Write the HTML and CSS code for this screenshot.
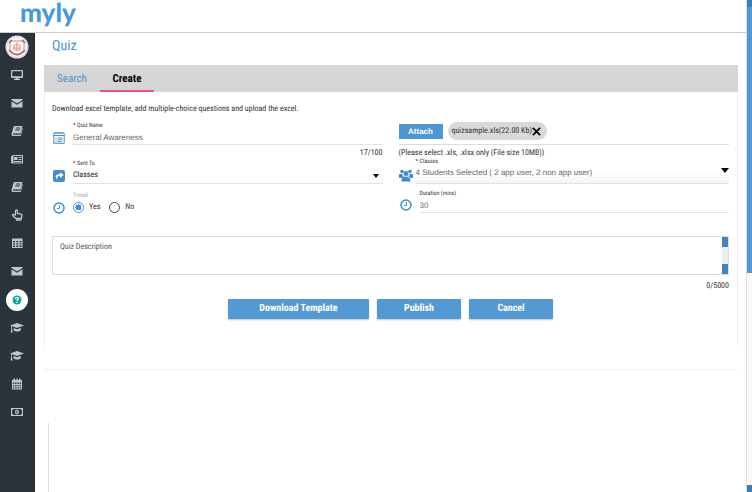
FILE: index.html
```html
<!DOCTYPE html>
<html lang="en">
<head>
<meta charset="utf-8">
<title>myly - Quiz</title>
<link rel="stylesheet" href="styles.css">
</head>
<body>
<svg class="defs" aria-hidden="true">
  <symbol id="mail" viewBox="0 0 12 12"><path d="M.5 2h11v1L6 6.500.5 3zM.5 4.200 6 7.700l5.500-3.500V10.500H.5z"/></symbol>
  <symbol id="book" viewBox="0 0 12 12"><path d="M4 1h7.500L9.500 8.500H2.500c-1 0-1 1.300 0 1.300h7L11.300 3l.5.500-2 7.500H2C.5 11 .2 9.700.6 8.500L2.500 2C2.800 1.300 3.200 1 4 1z"/><path class="cut" d="M4.800 3h4.500M4.300 5h4.500"/></symbol>
  <symbol id="cap" viewBox="0 0 14 12"><path d="M7 1 14 3.500 7 6 2 4.300V7l.6 3.500H.6L1.200 7V4L0 3.500zM3.500 6 7 7.200 10.800 6v2.300C9 10 5.300 10 3.500 8.300z"/></symbol>
  <symbol id="clock" viewBox="0 0 12 12"><circle class="line" cx="6" cy="6" r="5"/><path class="line thin" d="M6.500 3v3.500H4"/></symbol>
</svg>
<div class="page">
  <header class="header"><a class="logo" href="#">myly</a></header>
  <div class="body">
    <nav class="sidebar" aria-label="Main">
      <a class="item crest" href="#" aria-label="School"><svg viewBox="0 0 24 24"><circle cx="12" cy="12" r="11.500" fill="#f5f2f3"/><circle cx="12" cy="12" r="10.500" fill="none" stroke="#d3bcc3" stroke-width="1" stroke-dasharray="2 1"/><path d="M5 6h14v7c0 4-4 6-7 7-3-1-7-3-7-7z" fill="#fff" stroke="#a99aa5"/><path d="M9 10h6v5H9zM12 7v9M8 13h8" fill="none" stroke="#d49a7c"/><path d="M4 15q8 9 16 0M4 8l3-3M20 8l-3-3" fill="none" stroke="#c14b60" stroke-width="1.300"/></svg></a>
      <a class="item" href="#" aria-label="Dashboard"><svg viewBox="0 0 12 12"><path fill-rule="evenodd" d="M1 1h10q1 0 1 1v6q0 1-1 1H7.500v1H9v1H3v-1h1.500V9H1Q0 9 0 8V2q0-1 1-1zm.300 1.300v5h9.400v-5z"/></svg></a>
      <a class="item" href="#" aria-label="Messages"><svg><use href="#mail"/></svg></a>
      <a class="item" href="#" aria-label="Diary"><svg><use href="#book"/></svg></a>
      <a class="item" href="#" aria-label="News"><svg viewBox="0 0 12 12"><path fill-rule="evenodd" d="M1.500 2H12v8.500H1Q0 10.500 0 9V3h1.500zM2.500 3v6.500H11V3zM3 4h3.500v3H3zm4.500 0h3v1h-3zm0 2h3v1h-3zM3 8h7.500v1H3z"/></svg></a>
      <a class="item" href="#" aria-label="Library"><svg><use href="#book"/></svg></a>
      <a class="item" href="#" aria-label="Activities"><svg viewBox="0 0 12 12"><path fill="none" stroke="currentColor" stroke-width="1.300" d="M4.500 6V1.800q0-1 1-1t1 1V4.500l3.500.700q1 .300.900 1.500L10.300 9.500H5L1.500 6.500q0-1.500 1.500-1zM5 11.200h5.500"/></svg></a>
      <a class="item" href="#" aria-label="Timetable"><svg viewBox="0 0 12 12"><path fill-rule="evenodd" d="M1 1.500h10.500V11H1zM2 4v1.300h2V4zm3.300 0v1.300h2V4zm3.200 0v1.300h2V4zM2 6.300v1.300h2V6.300zm3.300 0v1.300h2V6.300zm3.200 0v1.300h2V6.300zM2 8.600v1.400h2V8.600zm3.300 0v1.400h2V8.600zm3.200 0v1.400h2V8.600z"/></svg></a>
      <a class="item" href="#" aria-label="Inbox"><svg><use href="#mail"/></svg></a>
      <a class="item current" href="#" aria-label="Quiz"><svg viewBox="0 0 12 12"><circle cx="6" cy="6" r="4.500"/><path fill="none" stroke="#fff" stroke-width="1.200" d="M4.500 5q0-1.500 1.500-1.500T7.500 4.800Q7.500 5.500 6 6.200V7M6 7.700v1.200"/></svg></a>
      <a class="item" href="#" aria-label="Courses"><svg class="hat"><use href="#cap"/></svg></a>
      <a class="item" href="#" aria-label="Graduation"><svg class="hat"><use href="#cap"/></svg></a>
      <a class="item" href="#" aria-label="Calendar"><svg viewBox="0 0 12 12"><path fill-rule="evenodd" d="M1 2h1.500V.500H4V2h1.300V.500h1.400V2H8V.500h1.500V2H11v9.500H1zm1 2.500V6h1.300V4.500zm2.200 0V6h1.400V4.500zm2.300 0V6h1.300V4.500zm2.200 0V6H10V4.500zM2 7v1.300h1.300V7zm2.200 0v1.300h1.400V7zm2.300 0v1.300h1.300V7zm2.200 0v1.300H10V7zM2 9.300v1.200h1.300V9.300zm2.200 0v1.200h1.400V9.300zm2.300 0v1.200h1.300V9.300zm2.200 0v1.200H10V9.300z"/></svg></a>
      <a class="item" href="#" aria-label="Fees"><svg viewBox="0 0 12 12"><path fill-rule="evenodd" d="M0 2h12v8H0zm2.500 1Q2 4 1 4.200v3.600Q2 8 2.500 9h7q.500-1 1.500-1.200V4.200Q10 4 9.500 3z"/><ellipse cx="6" cy="6" rx="2" ry="2.600"/><path class="cut" d="M6 4.500v3"/></svg></a>
    </nav>
    <main class="main">
      <h1 class="title">Quiz</h1>
      <section class="panel">
        <nav class="tabs" aria-label="Quiz views"><a class="tab" href="#">Search</a><a class="tab active" href="#">Create</a></nav>
        <form class="form">
          <p class="intro">Download excel template, add multiple-choice questions and upload the excel.</p>
          <div class="columns">
            <div class="row name-row">
              <svg class="icon" viewBox="0 0 12 12"><path class="line thin" d="M.8 1h10.400v10.300H.8zM.8 3.500h10.400M3 0v2M5 0v2M7 0v2M9 0v2M2.500 6h1M4.500 6h5M2.500 7.800h1M4.500 7.800h5M2.500 9.600h1M4.500 9.600h4"/></svg>
              <div class="field"><label for="name"><b>*</b> Quiz Name</label><input class="control wide" id="name" value="General Awareness"></div>
              <span class="note end">17/100</span>
            </div>
            <div class="row name-row">
              <div class="upload"><button class="attach" type="button">Attach</button><span class="chip">quizsample.xls(22.00 Kb)<button class="remove" type="button" aria-label="Remove file"><svg viewBox="0 0 10 10"><path d="m1 1 8 8M9 1 1 9"/></svg></button></span></div>
              <span class="note">(Please select .xls, .xlsx only (File size 10MB))</span>
            </div>
            <div class="row sent">
              <svg class="icon" viewBox="0 0 12 12"><rect width="12" height="12" rx="2" fill="currentColor"/><path fill="#fff" d="M7 2.200 10.700 5 7 8V6Q3.500 5.800 4.200 10 0 4.500 7 4z"/></svg>
              <div class="field"><label for="sent"><b>*</b> Sent To</label><select class="control dark" id="sent"><option>Classes</option></select><svg class="arrow" viewBox="0 0 8 5"><path d="M1 0h6L4 4z"/></svg></div>
            </div>
            <div class="row tight">
              <svg class="icon people" viewBox="0 0 14 13"><g fill="currentColor"><circle cx="3" cy="2.500" r="1.800"/><circle cx="11" cy="2.500" r="1.800"/><circle cx="7" cy="4.500" r="2.500"/><path d="M0 5h3.500q0 2 1 2.500L2.500 9H0zM10.500 5H14v4h-2.500l-2-1.500q1-.500 1-2.500zM2.500 12.500Q2 7 7 7.500t4.500 5z"/></g></svg>
              <div class="field shaded"><label for="classes"><b>*</b> Classes</label><select class="control wide" id="classes"><option>4 Students Selected ( 2 app user, 2 non app user)</option></select><svg class="arrow big" viewBox="0 0 8 5"><path d="M0 0h8L4 5z"/></svg></div>
            </div>
            <fieldset class="row timed">
              <svg class="icon"><use href="#clock"/></svg>
              <div class="field"><legend>Timed</legend><div class="radios"><label><input type="radio" name="timed" checked>Yes</label><label><input type="radio" name="timed">No</label></div></div>
            </fieldset>
            <div class="row roomy">
              <svg class="icon"><use href="#clock"/></svg>
              <div class="field"><label for="mins">Duration (mins)</label><input class="control wide" id="mins" value="30"></div>
            </div>
          </div>
          <div class="description"><textarea aria-label="Quiz Description" placeholder="Quiz Description"></textarea><span class="mini-scroll"></span></div>
          <div class="note end count">0/5000</div>
          <div class="actions"><button class="large" type="button">Download Template</button><button type="button">Publish</button><button type="button">Cancel</button></div>
        </form>
      </section>
      <div class="footer"></div>
    </main>
  </div>
</div>
<div class="rail" aria-hidden="true"><span class="cap-end"></span><span class="thumb"></span><span class="track"></span><span class="cap-end"></span></div>
</body>
</html>
```
FILE: styles.css
```css
* { box-sizing: border-box; }
body { margin: 0; min-height: 100vh; display: flex; background: #fff; color: #333; font: 8px/10px "Roboto Condensed", "Liberation Sans Narrow", Roboto, sans-serif; text-rendering: geometricPrecision; }
button, input, select, textarea { font: inherit; color: inherit; margin: 0; text-rendering: inherit; }
a { text-decoration: none; }
.defs { position: absolute; width: 0; height: 0; }
.page { flex: 1; min-width: 0; display: flex; flex-direction: column; }
.header { height: 33px; border-bottom: 1px solid #ccc; padding-left: 20px; }
.logo { display: inline-block; vertical-align: top; margin-top: -4px; color: #4b98d3; font: 900 26px/32px Lato, sans-serif; }
.body { flex: 1; display: flex; }
.sidebar { width: 35px; flex: none; background: #2b333b; color: #c3c6c9; border-right: 1px solid #20272d; }
.item { height: 28px; display: flex; align-items: center; justify-content: center; color: inherit; }
.item svg { width: 12px; height: 12px; fill: currentColor; }
.item .hat { width: 14px; }
.item.crest svg { width: 24px; height: 24px; }
.item.current { width: 22px; height: 22px; margin: 4px 6px 3px; border-radius: 50%; background: #fff; color: #16a596; }
.cut { fill: none; stroke: #2b333b; stroke-width: 1; }
.main { flex: 1; min-width: 0; padding: 4px 8px 0 9px; display: flex; flex-direction: column; }
.title { margin: 0 8px; color: #4b93cc; font-size: 14px; line-height: 18px; font-weight: 400; }
.panel { margin-top: 10px; border: 1px solid #eee; border-width: 0 1px; }
.tabs { height: 27px; background: #d6d6d6; display: flex; font-size: 11px; line-height: 28px; margin: 0 -1px; }
.tab { width: 56px; text-align: center; color: #4b93cc; }
.tab.active { color: #000; font-weight: 700; width: 54px; border-bottom: 2px solid #ef5277; }
.form { padding: 12px 8px 27px 7px; }
.intro { margin: 0 0 8px; line-height: 10px; }
.columns { display: grid; grid-template-columns: 1fr 1fr; column-gap: 16px; }
.row { min-width: 0; height: 38px; display: flex; flex-wrap: wrap; align-items: flex-start; margin: 0; padding: 0; border: 0; }
.icon { width: 12px; height: 12px; margin: 10px 8px 0 1px; color: #448dc9; }
.line { fill: none; stroke: currentColor; stroke-width: 1.500; }
.thin { stroke-width: 1; }
.field { position: relative; flex: 1; min-width: 0; border-bottom: 1px solid #e2e2e2; }
.field > label { display: block; font-size: 6px; line-height: 8px; }
.field b { color: #d22; }
.control { display: block; width: 100%; height: 14px; padding: 0; border: 0; background: transparent; appearance: none; font-size: 8px; outline: 0; }
.wide { font-family: "Liberation Sans", sans-serif; color: #666; }
.dark { color: #222; }
.arrow { position: absolute; right: 3px; bottom: 4px; width: 8px; height: 5px; }
.arrow.big { right: 0; bottom: 10px; }
.note { flex-basis: 100%; line-height: 12px; }
.end { text-align: right; }
.name-row .field { height: 23px; }
.upload { flex-basis: 100%; height: 23px; border-bottom: 1px solid #ddd; display: flex; align-items: flex-start; gap: 5px; }
.attach { width: 44px; height: 15px; border: 0; padding: 0; margin-top: 2px; background: #4f96d1; color: #fff; font: 700 8px/15px "Liberation Sans", sans-serif; }
.chip { height: 18px; border-radius: 9px; padding: 0 6px 0 4px; display: flex; align-items: center; background: #d9d9d9; }
.remove { width: 9px; height: 9px; border: 0; padding: 0; background: none; display: flex; }
.remove svg { width: 9px; height: 9px; stroke: #000; stroke-width: 2; }
.sent .field { height: 24px; }
.tight { height: 36px; margin-top: -2px; }
.people { width: 14px; height: 13px; margin: 11px 3px 0 0; }
.shaded { height: 26px; background: linear-gradient(#fff 50%, #f5f5f5); }
.roomy { margin-top: -8px; }
.roomy .icon { margin-top: 9px; }
.roomy .field { height: 23px; }
.timed { margin-top: -6px; }
.timed legend { padding: 0; color: #aaa; font-size: 6px; line-height: 8px; }
.timed .field { border: 0; }
.radios { display: flex; gap: 9px; }
.radios label { display: flex; align-items: center; gap: 5px; height: 14px; }
.radios input { appearance: none; width: 11px; height: 11px; border: 1px solid #444; border-radius: 50%; }
.radios input:checked { border-color: #448dc9; background: radial-gradient(circle, #448dc9 3px, transparent 3px); }
.description { height: 39px; margin-top: 6px; border: 1px solid #ddd; display: flex; }
.description textarea { flex: 1; min-width: 0; border: 0; padding: 5px 7px; background: transparent; resize: none; outline: 0; overflow: hidden; }
textarea::placeholder { color: #555; opacity: 1; }
.mini-scroll { width: 6px; border: solid #4883b8; border-width: 10px 0; background: #eee; }
.count { margin-top: 5px; }
.actions { display: flex; justify-content: center; gap: 8px; margin-top: 7px; }
.actions button { width: 84px; height: 20px; border: 0; border-radius: 1px; padding: 0; background: #5599d4; color: #fff; font-size: 10px; font-weight: 700; box-shadow: 0 1px 2px #b4c5d4; }
.actions .large { width: 141px; }
.footer { flex: 1; margin-top: 23px; border-top: 1px solid #eee; padding: 53px 4px 0; display: flex; }
.footer::before { content: ""; border-left: 1px solid #ddd; }
.rail { width: 6px; flex: none; display: flex; flex-direction: column; border-left: 1px solid #ddd; }
.cap-end { height: 7px; background: #427cac; }
.thumb { flex: 266; background: #5199d5; }
.track { flex: 212; background: #fafafa; }
```
